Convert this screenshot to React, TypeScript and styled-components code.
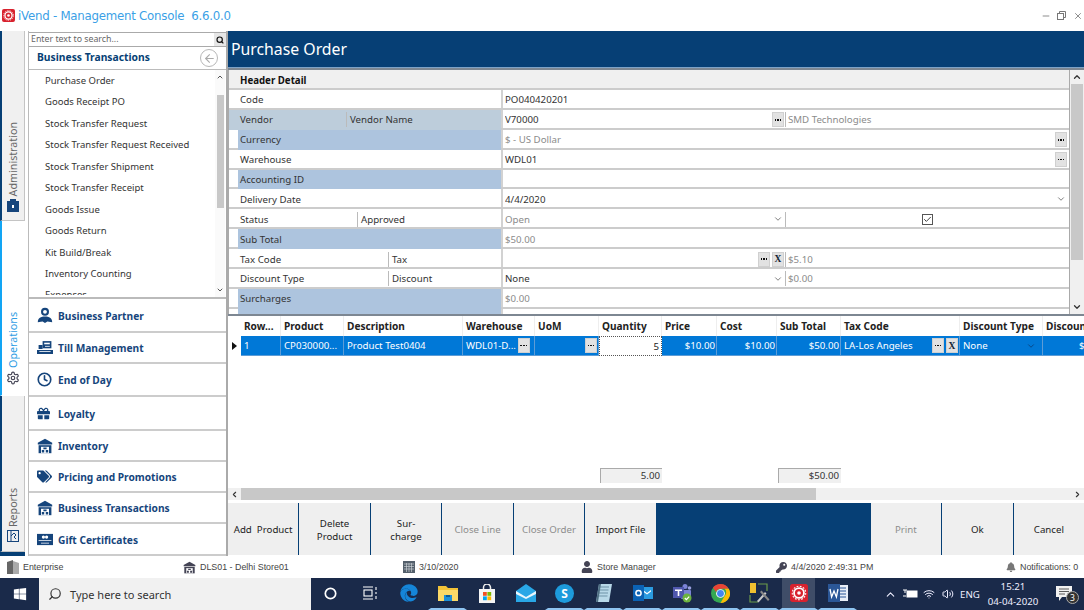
import React from "react";
import styled, { createGlobalStyle } from "styled-components";
import { FaGift, FaTags, FaEdge, FaWindows, FaUser, FaKey, FaBell } from "react-icons/fa";
import { LuClock, LuSettings, LuSearch, LuArrowLeft, LuChevronDown, LuChevronUp, LuChevronLeft, LuChevronRight, LuMinus, LuX, LuCheck, LuWifi, LuVolume2 } from "react-icons/lu";

const NAVY = "#063f75";
const FONT = `"Noto Sans", "Liberation Sans", sans-serif`;

const Global = createGlobalStyle`
  html, body { margin: 0; padding: 0; background: #fff; }
  body { font-family: ${FONT}; font-size: 9.7px; color: #222; overflow: hidden; }
  * { box-sizing: border-box; }
`;

const Page = styled.div`
  width: 1084px; height: 610px; display: flex; flex-direction: column; overflow: hidden;
`;
const TitleBar = styled.div`
  height: 31px; display: flex; align-items: center; padding: 0 0 0 2px; flex: none;
`;
const TitleText = styled.div`
  margin-left: 3px; color: #3b9fe6; white-space: pre; font-family: "DejaVu Sans", sans-serif; letter-spacing: -0.25px; font-size: 11.8px;
`;
const WinControls = styled.div`
  margin-left: auto; display: flex; gap: 3px; padding-right: 0; color: #777; align-items: center;
`;
const WinBtn = styled.div`
  width: 13px; height: 13px; display: flex; align-items: center; justify-content: center;
`;
const Body = styled.div`
  flex: none; height: 525px; display: flex;
`;
const Rail = styled.div`
  width: 28px; flex: none; display: flex; flex-direction: column; background: #fff;
`;
const RailTab = styled.div<{ $h: number; $active?: boolean; $pb: number }>`
  height: ${p => p.$h}px; width: 25px; display: flex; flex-direction: column; align-items: center; justify-content: flex-end; flex: none;
  border-left: 2px solid ${p => (p.$active ? "#12a5f4" : NAVY)};
  background: ${p => (p.$active ? "#fff" : "#f0f0f0")};
  border-right: 1px solid ${p => (p.$active ? "#fff" : "#c4c4c4")};
  border-bottom: 1px solid ${p => (p.$active ? "#fff" : "#c4c4c4")};
  color: ${p => (p.$active ? "#2e9de4" : "#666")};
  padding-bottom: ${p => p.$pb}px; gap: 3px;
`;
const RailFoot = styled.div`
  width: 25px; flex: 1; background: ${NAVY};
`;
const RailLabel = styled.div`
  writing-mode: vertical-rl; transform: rotate(180deg); font-size: 10.7px; line-height: 14px; white-space: nowrap;
`;
const Panel = styled.div`
  width: 200px; flex: none; display: flex; flex-direction: column; border-left: 1px solid #bbb; border-right: 2px solid #aaa;
`;
const SearchRow = styled.div`
  height: 15px; margin-top: 1px; display: flex; border-top: 1px solid #aaa; border-bottom: 1px solid #aaa; flex: none;
`;
const SearchText = styled.div`
  flex: 1; color: #666; padding-left: 2px; line-height: 12px; font-size: 8.8px;
`;
const SearchBtn = styled.div`
  width: 12px; background: #e6e6e6; display: flex; align-items: center; justify-content: center; color: #111;
`;
const PanelHead = styled.div`
  height: 23px; display: flex; align-items: center; padding: 0 8px 0 8px; border-bottom: 1px solid #bbb; flex: none;
`;
const PanelTitle = styled.div`
  color: ${NAVY}; font-weight: 700; font-size: 10.3px; flex: 1; margin-top: -2px;
`;
const BackCircle = styled.div`
  width: 18px; height: 18px; border-radius: 50%; border: 1.5px solid #b8b8b8; color: #aaa; display: flex; align-items: center; justify-content: center;
`;
const ListWrap = styled.div`
  height: 229px; display: flex; flex: none; border-bottom: 2px solid #bbb; overflow: hidden;
`;
const List = styled.div`
  flex: 1; padding: 0 0 0 16px; overflow: hidden; height: 225px;
`;
const ListItem = styled.div`
  height: 21.45px; line-height: 21.45px; color: #333; white-space: nowrap; font-size: 9.5px;
`;
const VScroll = styled.div`
  width: 10px; margin-right: 1px; display: flex; flex-direction: column; align-items: center; color: #555; background: #fafafa;
`;
const VThumb = styled.div<{ $top: number; $h: number; $w: number }>`
  width: ${p => p.$w}px; height: ${p => p.$h}px; margin-top: ${p => p.$top}px; background: #c8c8c8; flex: none;
`;
const ArrowSlot = styled.div<{ $end?: boolean }>`
  margin-top: ${p => (p.$end ? "auto" : "0")}; height: 14px; display: flex; align-items: center; justify-content: center; flex: none;
`;
const Accordion = styled.div`
  display: flex; flex-direction: column; flex: 1;
`;
const AccItem = styled.div<{ $h: number }>`
  height: ${p => p.$h}px; display: flex; align-items: center; border-bottom: 2px solid #ccc; color: #16457c;
`;
const AccIcon = styled.div`
  width: 29px; padding-left: 8px; display: flex; justify-content: flex-start; align-items: center; flex: none;
`;
const AccText = styled.div`
  font-weight: 700; font-size: 10.2px; padding-top: 1px;
`;
const Main = styled.div`
  flex: 1; min-width: 0; display: flex; flex-direction: column;
`;
const MainHead = styled.div`
  height: 37px; background: ${NAVY}; color: #fff; font-size: 15.8px; display: flex; align-items: center; padding-left: 3px; flex: none;
  border-bottom: 1px solid #7da2c6;
`;
const GridOuter = styled.div`
  height: 248px; display: flex; border-top: 2px solid #7d8792; border-bottom: 2px solid #7d8792; flex: none;
`;
const Grid = styled.div`
  width: 842px; overflow: hidden; flex: none; border-left: 1px solid #aaa; border-right: 1px solid #aaa;
`;
const GridScroll = styled.div`
  flex: 1; background: #f0f0f0; display: flex; flex-direction: column; align-items: center; color: #333;
`;
const GroupRow = styled.div`
  height: 20px; background: #f0f0f0; border-bottom: 2px solid #ccc; font-weight: 700; padding-left: 11px; line-height: 21px; color: #111;
`;
const Row = styled.div`
  height: 19.9px; display: flex; border-bottom: 2px solid #ccc; padding-top: 2px;
`;
const Label = styled.div<{ $tone?: "plain" | "gray" | "blue" }>`
  flex: none; display: flex; align-items: center; color: #333; margin: -2px 0 -2px 0; padding: 2px 0 2px 0; 
  padding-left: ${p => (p.$tone === "blue" ? 2 : 11)}px;
  margin-left: ${p => (p.$tone === "blue" ? 9 : 0)}px;
  width: ${p => (p.$tone === "blue" ? 263 : 272)}px;
  background: ${p => (p.$tone === "blue" ? "#adc4de" : p.$tone === "gray" ? "#bdcddb" : "transparent")};
`;
const LabelLeft = styled.div<{ $w: number }>`
  width: ${p => p.$w}px; flex: none;
`;
const LabelRight = styled.div`
  border-left: 1px solid #bbb; padding-left: 3px; height: 15px; line-height: 15px;
`;
const Value = styled.div<{ $muted?: boolean }>`
  flex: 1; min-width: 0; display: flex; align-items: center; border-left: 2px solid #d2d2d2; padding-left: 2px; margin-top: -2px; padding-top: 2px;
  color: ${p => (p.$muted ? "#8b8b8b" : "#333")};
`;
const ValueLeft = styled.div`
  width: 280px; flex: none; display: flex; align-items: center; padding-right: 1px; gap: 2px;
`;
const Grow = styled.div`
  flex: 1; min-width: 0; white-space: nowrap; overflow: hidden;
`;
const ValueRight = styled.div`
  flex: 1; height: 15px; line-height: 15px; border-left: 1px solid #bbb; padding-left: 2px; color: #8b8b8b; display: flex; align-items: center; justify-content: flex-start;
`;
const CheckWrap = styled.div`
  margin-left: 134px; width: 11px; height: 11px; border: 1px solid #555; display: flex; align-items: center; justify-content: center; color: #333; background: #fff;
`;
const MiniBtn = styled.div<{ $w?: number; $h?: number }>`
  width: ${p => p.$w ?? 12}px; height: ${p => p.$h ?? 15}px; flex: none; background: #e2e2e2; border: 1px solid #d0d0d0; color: #123;
  display: flex; align-items: center; justify-content: center; gap: 1px;
  font-family: "Liberation Serif", serif; font-weight: 700; font-size: 9.5px; line-height: 10px;
`;
const Dot = styled.span`
  width: 1.6px; height: 1.6px; background: #111; display: block;
`;
const Chevron = styled.div`
  width: 12px; display: flex; justify-content: center; color: #666; flex: none;
`;
const RightPad = styled.div`
  padding-right: 2px; display: flex;
`;
const TableArea = styled.div`
  flex: 1; min-height: 0; display: flex; flex-direction: column; overflow: hidden;
`;
const COLS = "13px 40px 63px 119px 72px 64px 63px 55px 60px 64px 119px 83px 100px";
const TRow = styled.div<{ $h: number }>`
  display: grid; grid-template-columns: ${COLS}; height: ${p => p.$h}px; width: 955px; flex: none;
`;
const Th = styled.div`
  font-weight: 700; font-size: 10.1px; color: #222; padding-left: 3px; line-height: 21px; border-right: 1px solid #eee; white-space: nowrap; overflow: hidden;
`;
const Indicator = styled.div`
  display: flex; align-items: center; justify-content: center;
`;
const Arrow = styled.div`
  width: 0; height: 0; border-left: 5px solid #111; border-top: 4px solid transparent; border-bottom: 4px solid transparent;
`;
const Td = styled.div<{ $right?: boolean }>`
  background: #0078d7; color: #fff; border-right: 1px solid #5d9cd6; border-bottom: 1px solid #5d9cd6; display: flex; align-items: center; gap: 2px;
  padding: 0 1px 0 3px; justify-content: ${p => (p.$right ? "flex-end" : "flex-start")}; white-space: nowrap; overflow: hidden;
`;
const ClippedMoneyCell = styled(Td)`
  padding-left: 36px;
`;
const QtyCell = styled.div`
  background: #fff; color: #222; border: 1px dotted #555; display: flex; align-items: center; justify-content: flex-end; padding-right: 2px;
`;
const CellChevron = styled.div`
  margin-left: auto; color: #0a3f78; display: flex; padding-right: 5px;
`;
const Summary = styled.div`
  margin-top: auto; display: grid; grid-template-columns: ${COLS}; width: 955px; height: 15px; flex: none; margin-bottom: 5px;
`;
const SumCell = styled.div<{ $col: number }>`
  grid-column: ${p => p.$col}; background: #f0f0f0; border-top: 1px solid #aaa; border-left: 1px solid #aaa; text-align: right; padding-right: 2px; line-height: 14px; color: #333; margin-left: 1px;
`;
const HScroll = styled.div`
  height: 12px; flex: none; display: flex; background: #f0f0f0; align-items: center; color: #333; margin-bottom: 3px;
`;
const HArrow = styled.div`
  width: 13px; display: flex; justify-content: center; flex: none;
`;
const HThumb = styled.div`
  width: 575px; height: 12px; background: #c8c8c8; flex: none;
`;
const BtnBar = styled.div`
  height: 52px; flex: none; background: ${NAVY}; display: flex; gap: 1.3px; margin-bottom: 1px;
`;
const ActionBtn = styled.div<{ $off?: boolean; $push?: boolean }>`
  width: 70.2px; flex: none; background: #efefef; display: flex; align-items: center; justify-content: center; text-align: center; line-height: 13px;
  margin-left: ${p => (p.$push ? "auto" : "0")}; color: ${p => (p.$off ? "#8d8d8d" : "#222")}; white-space: pre-wrap; padding-top: 1px;
`;
const StatusBar = styled.div`
  height: 22px; flex: none; display: flex; align-items: center; color: #444; background: #fff;
  font-family: "Liberation Sans", sans-serif; font-size: 8.9px;
`;
const StatusItem = styled.div<{ $w: number; $pad?: number }>`
  width: ${p => p.$w}px; flex: none; display: flex; align-items: center; gap: 4px; white-space: nowrap; color: #444; padding-left: ${p => p.$pad ?? 0}px;
`;
const Taskbar = styled.div`
  height: 32px; flex: none; background: #1a2a4a; display: flex; align-items: center; color: #fff;
`;
const StartBtn = styled.div`
  width: 39px; height: 32px; display: flex; align-items: center; justify-content: center; color: #fff;
`;
const SearchBox = styled.div`
  width: 272px; height: 32px; background: #f1f1f1; color: #333; display: flex; align-items: center; padding-left: 9px; gap: 8px; font-size: 11px;
`;
const Magnifier = styled(LuSearch)`
  transform: scaleX(-1);
`;
const TaskIcon = styled.div<{ $on?: boolean; $hi?: boolean }>`
  width: 39px; height: 32px; flex: none; display: flex; align-items: center; justify-content: center; position: relative;
  background: ${p => (p.$hi ? "#3f4d68" : "transparent")};
  border-bottom: 2px solid ${p => (p.$on ? "#8fc4f0" : "transparent")};
  border-left: ${p => (p.$on ? "3px solid #1a2a4a" : "0")};
  border-right: ${p => (p.$on ? "3px solid #1a2a4a" : "0")};
  font-weight: 700; font-size: 13px;
`;
const NotifyIcon = styled(TaskIcon)`
  width: 41px;
`;
const Tray = styled.div`
  margin-left: auto; display: flex; align-items: center; height: 32px;
`;
const TrayIcon = styled.div<{ $w: number }>`
  width: ${p => p.$w}px; display: flex; align-items: center; justify-content: center; font-size: 9.7px; color: #eef;
`;
const Clock = styled.div`
  width: 60px; text-align: center; line-height: 15px; font-size: 9.7px; color: #eef;
`;
const Badge = styled.div`
  position: absolute; right: 5px; bottom: 4px; width: 13px; height: 13px; border-radius: 50%; background: #333; border: 1px solid #aaa; font-size: 8.5px; font-weight: 400;
  display: flex; align-items: center; justify-content: center; color: #fff;
`;
const RoundGlyph = styled.div<{ $bg: string }>`
  width: 19px; height: 19px; background: ${p => p.$bg}; border-radius: 50%; color: #fff; display: flex; align-items: center; justify-content: center; font-size: 12px; font-weight: 700;
`;

const Logo = ({ s = 13 }: { s?: number }) => (
  <svg width={s} height={s} viewBox="0 0 20 20">
    <rect x="0" y="0" width="20" height="20" rx="3" fill="#d8222e" />
    <circle cx="10" cy="10" r="5.5" fill="none" stroke="#fff" strokeWidth="2" />
    <circle cx="10" cy="10" r="2" fill="#fff" />
    <circle cx="10" cy="10" r="7.5" fill="none" stroke="#fff" strokeWidth="1.2" strokeDasharray="2 1.6" />
  </svg>
);
const DotBtn = () => <MiniBtn><Dot /><Dot /><Dot /></MiniBtn>;
const Building = ({ s = 16, c = "#16457c" }: { s?: number; c?: string }) => (
  <svg width={s} height={s} viewBox="0 0 20 20" fill={c}>
    <path d="M10 1 1 6v2h18V6z" />
    <path d="M2 9h16v10H2z" />
    <path d="M5 11h10v8H5z" fill="#fff" />
    <path d="M6 15h3v3H6zM11 15h3v3h-3zM8 12h4v2H8z" />
  </svg>
);
const Partner = () => (
  <svg width="16" height="16" viewBox="0 0 20 20" fill="#16457c">
    <circle cx="10" cy="6" r="5" />
    <path d="M1 19c0-5 4-7 9-7s9 2 9 7l-6-1-3 2-3-2z" />
    <circle cx="10" cy="6" r="2.4" fill="#fff" />
  </svg>
);
const Till = () => (
  <svg width="16" height="15" viewBox="0 0 20 18" fill="#16457c">
    <path d="M7 1h11v9H7z" />
    <path d="M9 3h7v2H9z" fill="#fff" />
    <path d="M2 6h5v5H2zM0 12h20v5H0z" />
    <path d="M3 13.5h14v1H3z" fill="#fff" />
    <path d="M10 7h6v1h-6z" fill="#fff" />
  </svg>
);
const Gift = () => (
  <svg width="16" height="13" viewBox="0 0 20 16" fill="#16457c">
    <path d="M0 1h20v14H0z" />
    <path d="M2 9h16v1H2zM5 12h10v1H5z" fill="#fff" />
    <circle cx="8" cy="5" r="2" fill="#fff" />
    <circle cx="12" cy="5" r="2" fill="#fff" />
  </svg>
);
const Cal = () => (
  <svg width="12" height="12" viewBox="0 0 12 12">
    <rect width="12" height="12" fill="#54606c" />
    <path d="M1 3h10M1 5.5h10M1 8h10M3.5 2v9M6 2v9M8.5 2v9" stroke="#d6dbe0" strokeWidth=".6" />
  </svg>
);
const Tower = () => (
  <svg width="12" height="14" viewBox="0 0 12 14">
    <path d="M0 2 6 0v14H0z" fill="#666" />
    <path d="M6 1l6 2v11H6z" fill="#aaa" />
  </svg>
);
const Folder = () => (
  <svg width="20" height="17" viewBox="0 0 20 17">
    <path d="M0 1h8l2 2h10v13H0z" fill="#f3c338" />
    <path d="M0 5h20v11H0z" fill="#fbd968" />
    <path d="M6 10h8v6H6z" fill="#1d8fd8" />
    <path d="M8 10h4v2H8z" fill="#0e5a93" />
  </svg>
);
const Store = () => (
  <svg width="18" height="19" viewBox="0 0 18 19">
    <path d="M5.5 5V3.5a3.5 3.5 0 0 1 7 0V5" fill="none" stroke="#eee" strokeWidth="1.5" />
    <path d="M1 5h16v14H1z" fill="#f5f5f5" />
    <path d="M5 8h3.8v3.8H5z" fill="#f25022" />
    <path d="M9.4 8h3.8v3.8H9.4z" fill="#7fba00" />
    <path d="M5 12.4h3.8v3.8H5z" fill="#00a4ef" />
    <path d="M9.4 12.4h3.8v3.8H9.4z" fill="#ffb900" />
  </svg>
);
const Mail = () => (
  <svg width="20" height="18" viewBox="0 0 20 18">
    <path d="M0 7 10 0l10 7v11H0z" fill="#29a7e6" />
    <path d="M0 7l10 6 10-6v3l-10 5L0 10z" fill="#e8f6fd" />
  </svg>
);
const Notepad = () => (
  <svg width="18" height="20" viewBox="0 0 18 20">
    <path d="M4 1h13l-3 18H1z" fill="#b8d8e8" />
    <path d="M5 4h9M4.5 7h9M4 10h9M3.5 13h9" stroke="#6f93a8" strokeWidth="1" />
    <path d="M1 19 4 1h2L3 19z" fill="#4f6f82" />
  </svg>
);
const Outlook = () => (
  <svg width="20" height="18" viewBox="0 0 20 18">
    <rect x="8" y="3" width="12" height="12" fill="#2b9be0" />
    <path d="M10 6l4 3 4-3v1.6l-4 3-4-3z" fill="#fff" />
    <rect x="0" y="1" width="11" height="16" fill="#0b62b4" />
    <circle cx="5.5" cy="9" r="2.6" fill="none" stroke="#fff" strokeWidth="1.5" />
  </svg>
);
const Teams = () => (
  <svg width="20" height="20" viewBox="0 0 20 20">
    <circle cx="13" cy="3.5" r="2.5" fill="#7b83d6" />
    <circle cx="17.5" cy="5" r="1.8" fill="#9aa0e0" />
    <rect x="9" y="7" width="10" height="9" rx="1" fill="#7b83d6" />
    <rect x="1" y="4" width="11" height="11" fill="#4f57ae" />
    <path d="M3 6.5h7v1.6H7.3V13H5.7V8.1H3z" fill="#fff" />
    <circle cx="15" cy="15" r="4.5" fill="#6cb33f" />
    <path d="M12.8 15l1.6 1.6 2.8-3" fill="none" stroke="#fff" strokeWidth="1.2" />
  </svg>
);
const Chrome = () => (
  <svg width="19" height="19" viewBox="0 0 20 20">
    <circle cx="10" cy="10" r="10" fill="#34a853" />
    <path d="M10 0a10 10 0 0 1 8.7 5H10a5 5 0 0 0-4.7 3.3L2.1 3.9A10 10 0 0 1 10 0z" fill="#ea4335" />
    <path d="M18.7 5A10 10 0 0 1 10 20l4.3-7.5A5 5 0 0 0 14.3 5z" fill="#fbbc05" />
    <circle cx="10" cy="10" r="4.6" fill="#fff" />
    <circle cx="10" cy="10" r="3.6" fill="#4285f4" />
  </svg>
);
const Tools = () => (
  <svg width="22" height="20" viewBox="0 0 22 20">
    <rect x="1" y="0" width="6" height="10" fill="#f0c030" />
    <path d="M9 1h9v7M1 12v7h8" fill="none" stroke="#6a9a4a" strokeWidth="1.2" />
    <path d="M8 18l8-9 1.5 1.5-8 9z" fill="#ccc" />
    <path d="M19 18l-8-9 1.5-1.5 8 9z" fill="#888" />
  </svg>
);
const Word = () => (
  <svg width="20" height="18" viewBox="0 0 20 18">
    <rect x="8" y="1" width="12" height="16" fill="#e9eef7" />
    <path d="M11 4h7M11 7h7M11 10h7M11 13h7" stroke="#2b5797" strokeWidth="1" />
    <rect x="0" y="0" width="12" height="18" fill="#2b5797" />
    <path d="M2 5l1.6 8 2.4-6 2.4 6L10 5" fill="none" stroke="#fff" strokeWidth="1.3" />
  </svg>
);
const TaskView = () => (
  <svg width="14" height="14" viewBox="0 0 14 14" fill="none" stroke="#fff" strokeWidth="1.1">
    <path d="M0 1h10M0 13h10" />
    <rect x="1" y="4" width="8" height="6" />
    <path d="M13 1v3M13 6v2M13 10v3" />
  </svg>
);
const Battery = () => (
  <svg width="16" height="12" viewBox="0 0 16 12" fill="none" stroke="#fff">
    <rect x="5" y="3" width="10" height="6" fill="#fff" />
    <path d="M1 2h4M3 2v3M1 8h3" />
  </svg>
);
const Note = () => (
  <svg width="16" height="15" viewBox="0 0 16 15">
    <path d="M0 0h16v11H6l-3 4v-4H0z" fill="#f2f2f2" />
    <path d="M3 3h10M3 5.5h10M3 8h6" stroke="#333" strokeWidth=".8" />
  </svg>
);

const items = ["Purchase Order", "Goods Receipt PO", "Stock Transfer Request", "Stock Transfer Request Received", "Stock Transfer Shipment", "Stock Transfer Receipt", "Goods Issue", "Goods Return", "Kit Build/Break", "Inventory Counting", "Expenses"];
const acc: [number, React.ReactNode, string][] = [
  [34, <Partner />, "Business Partner"],
  [31, <Till />, "Till Management"],
  [33, <LuClock size={15} strokeWidth={2.6} />, "End of Day"],
  [34, <FaGift size={13} />, "Loyalty"],
  [31, <Building />, "Inventory"],
  [31, <FaTags size={15} />, "Pricing and Promotions"],
  [31, <Building />, "Business Transactions"],
  [32, <Gift />, "Gift Certificates"],
];
const headers = ["Row...", "Product", "Description", "Warehouse", "UoM", "Quantity", "Price", "Cost", "Sub Total", "Tax Code", "Discount Type", "Discount"];

export default function App() {
  return (
    <Page>
      <Global />
      <TitleBar>
        <Logo />
        <TitleText>iVend - Management Console  6.6.0.0</TitleText>
        <WinControls>
          <WinBtn><LuMinus size={10} /></WinBtn>
          <WinBtn>
            <svg width="9" height="9" viewBox="0 0 9 9" fill="none" stroke="#777"><rect x="0.5" y="2.5" width="6" height="6" /><path d="M2.5 2V.5h6v6H7" /></svg>
          </WinBtn>
          <WinBtn><LuX size={10} /></WinBtn>
        </WinControls>
      </TitleBar>
      <Body>
        <Rail>
          <RailTab $h={190} $pb={8}>
            <RailLabel>Administration</RailLabel>
            <svg width="12" height="13" viewBox="0 0 12 13" fill="#16457c"><path d="M0 2h12v11H0z" /><path d="M3 0h6v2H3z" /><path d="M5 6h2v3H5z" fill="#fff" /></svg>
          </RailTab>
          <RailTab $h={175} $active $pb={10}>
            <RailLabel>Operations</RailLabel>
            <LuSettings size={14} color="#445" />
          </RailTab>
          <RailTab $h={156} $pb={9}>
            <RailLabel>Reports</RailLabel>
            <svg width="12" height="12" viewBox="0 0 12 12" fill="none" stroke="#16457c"><rect x=".5" y=".5" width="11" height="11" /><path d="M4 1v10M4 6l3-3 2 2-2 2 2 2" /></svg>
          </RailTab>
          <RailFoot />
        </Rail>
        <Panel>
          <SearchRow>
            <SearchText>Enter text to search...</SearchText>
            <SearchBtn><LuSearch size={8} strokeWidth={3.5} /></SearchBtn>
          </SearchRow>
          <PanelHead>
            <PanelTitle>Business Transactions</PanelTitle>
            <BackCircle><LuArrowLeft size={13} /></BackCircle>
          </PanelHead>
          <ListWrap>
            <List>{items.map(t => <ListItem key={t}>{t}</ListItem>)}</List>
            <VScroll>
              <ArrowSlot><LuChevronUp size={8} strokeWidth={3} /></ArrowSlot>
              <VThumb $top={11} $h={113} $w={7} />
              <ArrowSlot $end><LuChevronDown size={8} strokeWidth={3} /></ArrowSlot>
            </VScroll>
          </ListWrap>
          <Accordion>
            {acc.map(([h, ic, t]) => (
              <AccItem $h={h} key={t}>
                <AccIcon>{ic}</AccIcon>
                <AccText>{t}</AccText>
              </AccItem>
            ))}
          </Accordion>
        </Panel>
        <Main>
          <MainHead>Purchase Order</MainHead>
          <GridOuter>
            <Grid>
              <GroupRow>Header Detail</GroupRow>
              <Row><Label>Code</Label><Value>PO040420201</Value></Row>
              <Row>
                <Label $tone="gray"><LabelLeft $w={106}>Vendor</LabelLeft><LabelRight>Vendor Name</LabelRight></Label>
                <Value><ValueLeft><Grow>V70000</Grow><DotBtn /></ValueLeft><ValueRight>SMD Technologies</ValueRight></Value>
              </Row>
              <Row><Label $tone="blue">Currency</Label><Value $muted><Grow>$ - US Dollar</Grow><RightPad><DotBtn /></RightPad></Value></Row>
              <Row><Label>Warehouse</Label><Value><Grow>WDL01</Grow><RightPad><DotBtn /></RightPad></Value></Row>
              <Row><Label $tone="blue">Accounting ID</Label><Value /></Row>
              <Row><Label>Delivery Date</Label><Value><Grow>4/4/2020</Grow><RightPad><Chevron><LuChevronDown size={10} /></Chevron></RightPad></Value></Row>
              <Row>
                <Label><LabelLeft $w={117}>Status</LabelLeft><LabelRight>Approved</LabelRight></Label>
                <Value $muted><ValueLeft><Grow>Open</Grow><Chevron><LuChevronDown size={10} /></Chevron></ValueLeft><ValueRight><CheckWrap><LuCheck size={9} strokeWidth={2.5} /></CheckWrap></ValueRight></Value>
              </Row>
              <Row><Label $tone="blue">Sub Total</Label><Value $muted>$50.00</Value></Row>
              <Row>
                <Label><LabelLeft $w={148}>Tax Code</LabelLeft><LabelRight>Tax</LabelRight></Label>
                <Value><ValueLeft><Grow /><DotBtn /><MiniBtn>X</MiniBtn></ValueLeft><ValueRight>$5.10</ValueRight></Value>
              </Row>
              <Row>
                <Label><LabelLeft $w={148}>Discount Type</LabelLeft><LabelRight>Discount</LabelRight></Label>
                <Value><ValueLeft><Grow>None</Grow><Chevron><LuChevronDown size={10} /></Chevron></ValueLeft><ValueRight>$0.00</ValueRight></Value>
              </Row>
              <Row><Label $tone="blue">Surcharges</Label><Value $muted>$0.00</Value></Row>
              <Row><Label $tone="blue" /><Value /></Row>
            </Grid>
            <GridScroll>
              <ArrowSlot><LuChevronUp size={10} strokeWidth={3} /></ArrowSlot>
              <VThumb $top={0} $h={176} $w={12} />
              <ArrowSlot $end><LuChevronDown size={10} strokeWidth={3} /></ArrowSlot>
            </GridScroll>
          </GridOuter>
          <TableArea>
            <TRow $h={20}>
              <div />
              {headers.map(h => <Th key={h}>{h}</Th>)}
            </TRow>
            <TRow $h={20}>
              <Indicator><Arrow /></Indicator>
              <Td>1</Td>
              <Td>CP030000...</Td>
              <Td>Product Test0404</Td>
              <Td>WDL01-D...<DotBtn /></Td>
              <Td><Grow /><DotBtn /></Td>
              <QtyCell>5</QtyCell>
              <Td $right>$10.00</Td>
              <Td $right>$10.00</Td>
              <Td $right>$50.00</Td>
              <Td>LA-Los Angeles<Grow /><DotBtn /><MiniBtn>X</MiniBtn></Td>
              <Td>None<CellChevron><LuChevronDown size={10} /></CellChevron></Td>
              <ClippedMoneyCell>$</ClippedMoneyCell>
            </TRow>
            <Summary>
              <SumCell $col={7}>5.00</SumCell>
              <SumCell $col={10}>$50.00</SumCell>
            </Summary>
            <HScroll>
              <HArrow><LuChevronLeft size={9} strokeWidth={3} /></HArrow>
              <HThumb />
              <Grow />
              <HArrow><LuChevronRight size={9} strokeWidth={3} /></HArrow>
            </HScroll>
            <BtnBar>
              <ActionBtn>Add  Product</ActionBtn>
              <ActionBtn>{"Delete\nProduct"}</ActionBtn>
              <ActionBtn>{"Sur-\ncharge"}</ActionBtn>
              <ActionBtn $off>Close Line</ActionBtn>
              <ActionBtn $off>Close Order</ActionBtn>
              <ActionBtn>Import File</ActionBtn>
              <ActionBtn $off $push>Print</ActionBtn>
              <ActionBtn>Ok</ActionBtn>
              <ActionBtn>Cancel</ActionBtn>
            </BtnBar>
          </TableArea>
        </Main>
      </Body>
      <StatusBar>
        <StatusItem $w={183} $pad={7}><Tower />Enterprise</StatusItem>
        <StatusItem $w={220}><Building s={13} c="#445" />DLS01 - Delhi Store01</StatusItem>
        <StatusItem $w={178}><Cal />3/10/2020</StatusItem>
        <StatusItem $w={195}><FaUser size={12} color="#445" />Store Manager</StatusItem>
        <StatusItem $w={230}><FaKey size={11} color="#445" />4/4/2020 2:49:31 PM</StatusItem>
        <StatusItem $w={78}><FaBell size={10} color="#777" />Notifications: 0</StatusItem>
      </StatusBar>
      <Taskbar>
        <StartBtn><FaWindows size={14} /></StartBtn>
        <SearchBox><Magnifier size={14} />Type here to search</SearchBox>
        <TaskIcon><svg width="13" height="13" viewBox="0 0 13 13"><circle cx="6.5" cy="6.5" r="5.2" fill="none" stroke="#fff" strokeWidth="1.7" /></svg></TaskIcon>
        <TaskIcon><TaskView /></TaskIcon>
        <TaskIcon><FaEdge size={18} color="#1585d8" /></TaskIcon>
        <TaskIcon $on><Folder /></TaskIcon>
        <TaskIcon><Store /></TaskIcon>
        <TaskIcon><Mail /></TaskIcon>
        <TaskIcon $on><RoundGlyph $bg="#1d9bdc">S</RoundGlyph></TaskIcon>
        <TaskIcon $on><Notepad /></TaskIcon>
        <TaskIcon $on><Outlook /></TaskIcon>
        <TaskIcon $on><Teams /></TaskIcon>
        <TaskIcon $on><Chrome /></TaskIcon>
        <TaskIcon $on><Tools /></TaskIcon>
        <TaskIcon $on $hi><Logo s={18} /></TaskIcon>
        <TaskIcon $on><Word /></TaskIcon>
        <Tray>
          <TrayIcon $w={19}><LuChevronUp size={13} /></TrayIcon>
          <TrayIcon $w={19}><Battery /></TrayIcon>
          <TrayIcon $w={19}><LuWifi size={12} /></TrayIcon>
          <TrayIcon $w={19}><LuVolume2 size={12} /></TrayIcon>
          <TrayIcon $w={26}>ENG</TrayIcon>
          <Clock>15:21<br />04-04-2020</Clock>
          <NotifyIcon><Note /><Badge>3</Badge></NotifyIcon>
        </Tray>
      </Taskbar>
    </Page>
  );
}
